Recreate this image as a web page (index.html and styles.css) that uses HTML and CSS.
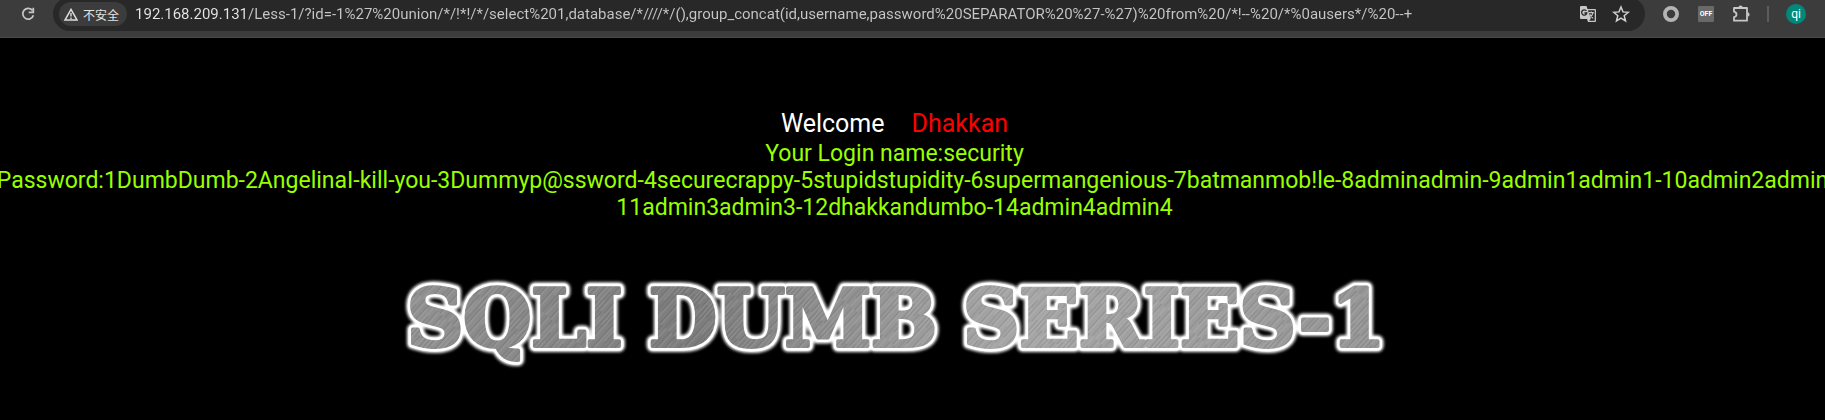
FILE: index.html
```html
<!DOCTYPE html>
<html lang="zh-CN">
<head>
<meta charset="utf-8">
<title>Less-1</title>
<link rel="stylesheet" href="styles.css">
</head>
<body>
<header class="toolbar">
  <button class="tool" aria-label="Reload">
    <svg width="16" height="16" viewBox="0 0 16 16" fill="none" stroke="#c7c7c7" stroke-width="1.7"><path d="M12.6 4.6A5.4 5.4 0 1 0 13.4 9.2"/><path d="M13.3 1.8v4.6H8.7"/></svg>
  </button>
  <div class="omnibox">
    <button class="chip">
      <svg width="14" height="13" viewBox="0 0 14 13"><path d="M7 1.4 12.9 11.9H1.1Z" fill="none" stroke="#dcdcdc" stroke-width="1.5"/><path d="M7 5v3.6M7 9.4v1.5" stroke="#dcdcdc" stroke-width="1.4"/></svg>
      <span>不安全</span>
    </button>
    <input class="url" type="text" aria-label="Address" spellcheck="false" value="192.168.209.131/Less-1/?id=-1%27%20union/*/!*!/*/select%201,database/*////*/(),group_concat(id,username,password%20SEPARATOR%20%27-%27)%20from%20/*!--%20/*%0ausers*/%20--+">
    <button class="tool" aria-label="Translate">
      <svg width="18" height="18" viewBox="0 0 18 18"><path d="M2 1h5.5l1 3H16q1 0 1 1v11q0 1-1 1H9l-1-3H2q-1 0-1-1V2q0-1 1-1Z" fill="#c7c7c7"/><path d="M9 5.3h6.7v10.4h-5.5l1.6-1.9Z" fill="#282828"/><path d="M7.4 6A2.6 2.6 0 1 0 7.8 8H5.4" fill="none" stroke="#282828" stroke-width="1.3"/><path d="M9.8 7.6h5M12.3 6.4v1.2M14 7.8q-.8 3.2-3.6 5M10.8 9.2q1 2.6 3.4 4.2" fill="none" stroke="#c7c7c7" stroke-width="1.1"/></svg>
    </button>
    <button class="tool" aria-label="Bookmark">
      <svg width="18" height="18" viewBox="0 0 18 18"><path d="m9 2 2 4.9 5.3.4-4.1 3.4 1.3 5.2L9 13.1l-4.5 2.8 1.3-5.2-4.1-3.4L7 6.9Z" fill="none" stroke="#d0d0d0" stroke-width="1.5"/></svg>
    </button>
  </div>
  <div class="extensions">
    <button class="tool" aria-label="Extension">
      <svg width="18" height="18" viewBox="0 0 18 18"><circle cx="9" cy="9" r="6.1" fill="none" stroke="#b4b4b4" stroke-width="3.8"/></svg>
    </button>
    <button class="badge">OFF</button>
    <button class="tool" aria-label="Extensions">
      <svg width="18" height="18" viewBox="0 0 18 18"><path d="M2 3h13v12.7H2v-3.6q2.5-.5 2.5-2.7T2 6.7Z" fill="none" stroke="#c7c7c7" stroke-width="1.8" stroke-linejoin="round"/><path d="M6.4 2.6a2.2 2.2 0 0 1 4.4 0ZM15.4 7.2a2.2 2.2 0 0 1 0 4.4Z" fill="#c7c7c7"/></svg>
    </button>
    <span class="divider"></span>
    <button class="avatar">qi</button>
  </div>
</header>
<main class="page">
  <h1 class="welcome"><span>Welcome</span><span class="name">Dhakkan</span></h1>
  <div class="result">
    <p>Your Login name:security</p>
    <p class="wide">Password:1DumbDumb-2AngelinaI-kill-you-3Dummyp@ssword-4securecrappy-5stupidstupidity-6supermangenious-7batmanmob!le-8adminadmin-9admin1admin1-10admin2admin</p>
    <p>11admin3admin3-12dhakkandumbo-14admin4admin4</p>
  </div>
  <svg class="banner" width="1000" height="100" viewBox="0 0 1000 100" role="img" aria-label="SQLI DUMB SERIES-1">
    <defs>
      <linearGradient id="shade" x1="0" x2="1" y1="0" y2="0">
        <stop offset="0" stop-color="#929292"/><stop offset=".3" stop-color="#7c7c7c"/><stop offset=".5" stop-color="#989898"/><stop offset=".62" stop-color="#a6a6a6"/><stop offset="1" stop-color="#949494"/>
      </linearGradient>
      <pattern id="metal" width="1000" height="100" patternUnits="userSpaceOnUse">
        <rect width="1000" height="100" fill="url(#shade)"/>
        <rect width="1000" height="100" fill="url(#brush)"/>
      </pattern>
      <pattern id="brush" width="17" height="70" patternUnits="userSpaceOnUse" patternTransform="rotate(42)">
        <path d="M1 0v40M4 20v50M8 0v30M11 35v35M14 5v45" stroke="#fff" stroke-opacity=".2" stroke-width=".7"/>
        <path d="M2.5 10v50M6 0v35M9.5 30v40M12.5 0v30M16 25v45" stroke="#000" stroke-opacity=".16" stroke-width=".7"/>
      </pattern>
      <filter id="glow" x="-5%" y="-30%" width="110%" height="160%"><feGaussianBlur stdDeviation="1.5"/></filter>
      <g id="title">
        <text x="12" y="73">SQLI</text><text x="254" y="73">DUMB</text><text x="568" y="73">SERIES-1</text>
      </g>
    </defs>
    <use href="#title" class="halo" filter="url(#glow)"/>
    <use href="#title" class="rim"/>
    <use href="#title" class="face"/>
  </svg>
</main>
</body>
</html>
```
FILE: styles.css
```css
* { box-sizing: border-box; }
body {
  margin: 0;
  min-height: 100vh;
  background: #000;
  overflow: hidden;
  font-family: Roboto, "Noto Sans CJK SC", sans-serif;
}
button, input {
  border: 0;
  padding: 0;
  background: none;
  color: inherit;
  font: inherit;
}
.toolbar {
  display: flex;
  align-items: center;
  gap: 17px;
  margin-top: -3px;
  padding: 0 19px 6px 20px;
  background: #3c3c3c;
  border-bottom: 1px solid #4a4a4a;
}
.tool { display: flex; }
.omnibox {
  flex: 1;
  display: flex;
  align-items: center;
  gap: 15px;
  height: 34px;
  padding: 0 15px 0 6px;
  border-radius: 17px;
  background: #282828;
}
.chip {
  display: flex;
  align-items: center;
  gap: 5px;
  height: 24px;
  padding: 0 8px 0 5px;
  margin-right: -7px;
  border-radius: 12px;
  background: #3c3c3c;
  color: #e3e3e3;
  font-size: 12px;
  white-space: nowrap;
}
.url {
  flex: 1;
  min-width: 0;
  height: 20px;
  font-size: 15px;
  line-height: 20px;
  outline: none;
  color: transparent;
  background: linear-gradient(90deg, #e8e8e8 112px, #c7c7c7 112px);
  background-clip: text;
}
.extensions {
  display: flex;
  align-items: center;
  gap: 17px;
}
.badge {
  width: 16px;
  height: 16px;
  margin: 0 1px;
  border-radius: 1px;
  background: #696969;
  color: #fff;
  font-size: 7px;
  font-weight: 700;
  line-height: 16px;
}
.divider { width: 2px; height: 16px; background: #5c5c5c; }
.avatar {
  width: 20px;
  height: 20px;
  border-radius: 50%;
  background: #00897b;
  color: #fff;
  font-size: 12px;
  line-height: 18px;
}
.page {
  display: flex;
  flex-direction: column;
  align-items: center;
  padding: 70px 36px 0 0;
  color: #fff;
}
.welcome {
  display: flex;
  gap: 27px;
  margin: 0;
  font-size: 25px;
  font-weight: 400;
  line-height: 32px;
}
.name { color: #f00; }
.result {
  display: flex;
  flex-direction: column;
  align-items: center;
  color: #9f0;
  font-size: 23px;
  line-height: 27px;
}
.result p { margin: 0; white-space: nowrap; }
.result .wide { margin-right: -36px; }
.banner {
  margin-top: 52px;
  font-family: "DejaVu Serif", serif;
  font-size: 78px;
  font-weight: 700;
  stroke-linejoin: round;
}
.halo { fill: #fff; stroke: #fff; stroke-width: 12px; }
.rim { fill: #fff; stroke: #fff; stroke-width: 9px; }
.face { fill: url(#metal); stroke: url(#metal); stroke-width: 4px; }
```
